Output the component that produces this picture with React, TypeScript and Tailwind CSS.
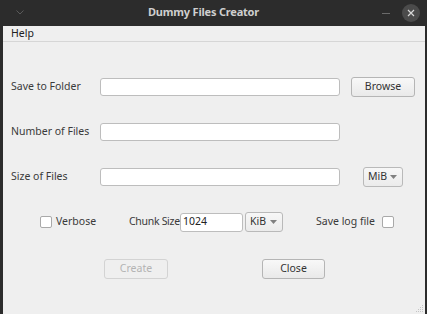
const font = { fontFamily: '"Noto Sans", "DejaVu Sans", sans-serif' };

function Combo({ label, className }: { label: string; className: string }) {
  return (
    <div
      className={`flex h-[20px] items-center justify-between rounded-[3px] border border-[#b9b9b9] bg-gradient-to-b from-[#f7f7f7] to-[#ebebeb] pl-[4px] pr-[5px] text-[10.5px] text-[#333] ${className}`}
    >
      <span>{label}</span>
      <svg width="7" height="4" viewBox="0 0 7 4">
        <path d="M0 0h7L3.5 4z" fill="#808080" />
      </svg>
    </div>
  );
}

function Btn({ label, disabled, className }: { label: string; disabled?: boolean; className: string }) {
  return (
    <div
      className={`flex h-[20px] items-center justify-center rounded-[3px] border text-[10.5px] ${
        disabled
          ? "border-[#d3d3d3] bg-[#efefef] text-[#b3b3b3]"
          : "border-[#b5b5b5] bg-gradient-to-b from-[#f8f8f8] to-[#e9e9e9] text-[#333]"
      } ${className}`}
    >
      {label}
    </div>
  );
}

function Field({ className, value }: { className: string; value?: string }) {
  return (
    <div
      className={`flex h-[18px] items-center rounded-[3px] border border-[#bdbdbd] bg-white px-[2px] text-[10.5px] text-[#222] ${className}`}
    >
      {value}
    </div>
  );
}

function Check({ className }: { className: string }) {
  return <div className={`h-[12px] w-[12px] shrink-0 rounded-[2px] border border-[#a9a9a9] bg-white ${className}`} />;
}

export default function App() {
  return (
    <div style={font} className="flex h-[314px] w-[427px] flex-col whitespace-nowrap bg-[#2c2c2c]">
      {/* Title bar */}
      <div className="relative flex h-[26px] items-center justify-center pb-[1px]">
        <svg className="absolute left-[16px] top-[10px]" width="8" height="5" viewBox="0 0 8 5">
          <path d="M0.5 0.5L4 4L7.5 0.5" stroke="#5a5a5a" fill="none" strokeWidth="1" />
        </svg>
        <span className="ml-[-20px] text-[11px] font-bold tracking-[-0.2px] text-[#cfcfcf]">Dummy Files Creator</span>
        <div className="absolute left-[382px] top-[13px] h-[1px] w-[8px] bg-[#6a6a6a]" />
        <div className="absolute left-[402px] top-[4px] flex h-[18px] w-[18px] items-center justify-center rounded-full bg-[#4b4b4b]">
          <svg width="8" height="8" viewBox="0 0 8 8">
            <path d="M1 1L7 7M7 1L1 7" stroke="#d8d8d8" strokeWidth="1.2" />
          </svg>
        </div>
      </div>

      {/* Body */}
      <div className="relative ml-[3px] mr-[2px] flex flex-1 flex-col bg-[#efefef] text-[10.5px] text-[#3a3a3a]">
        <div className="flex h-[16px] items-center border-b border-[#d6d6d6] pl-[8px] text-[#222]">Help</div>

        <div className="mt-[35px] flex h-[20px] items-center">
          <span className="ml-[8px] w-[89px]">Save to Folder</span>
          <Field className="w-[240px]" />
          <Btn label="Browse" className="ml-[11px] w-[64px]" />
        </div>

        <div className="mt-[25px] flex h-[20px] items-center">
          <span className="ml-[8px] w-[89px]">Number of Files</span>
          <Field className="w-[240px]" />
        </div>

        <div className="mt-[25px] flex h-[20px] items-center">
          <span className="ml-[8px] w-[89px]">Size of Files</span>
          <Field className="w-[240px]" />
          <Combo label="MiB" className="ml-[23px] w-[40px]" />
        </div>

        <div className="mt-[25px] flex h-[20px] items-center">
          <Check className="ml-[37px]" />
          <span className="ml-[4px] w-[73px]">Verbose</span>
          <span className="w-[51px] tracking-[-0.3px]">Chunk Size</span>
          <Field className="h-[19px] w-[63px]" value="1024" />
          <Combo label="KiB" className="ml-[2px] w-[38px]" />
          <span className="ml-[33px] w-[66px]">Save log file</span>
          <Check className="" />
        </div>

        <div className="mt-[27px] flex h-[20px] items-center">
          <Btn label="Create" disabled className="ml-[101px] w-[64px]" />
          <Btn label="Close" className="ml-[94px] w-[63px]" />
        </div>

        <svg className="absolute bottom-[1px] right-[1px]" width="9" height="9" viewBox="0 0 9 9">
          <g fill="#c4c4c4">
            <rect x="7" y="1" width="1" height="1" />
            <rect x="5" y="3" width="1" height="1" />
            <rect x="7" y="3" width="1" height="1" />
            <rect x="3" y="5" width="1" height="1" />
            <rect x="5" y="5" width="1" height="1" />
            <rect x="7" y="5" width="1" height="1" />
            <rect x="1" y="7" width="1" height="1" />
            <rect x="3" y="7" width="1" height="1" />
            <rect x="5" y="7" width="1" height="1" />
            <rect x="7" y="7" width="1" height="1" />
          </g>
        </svg>
      </div>
    </div>
  );
}
